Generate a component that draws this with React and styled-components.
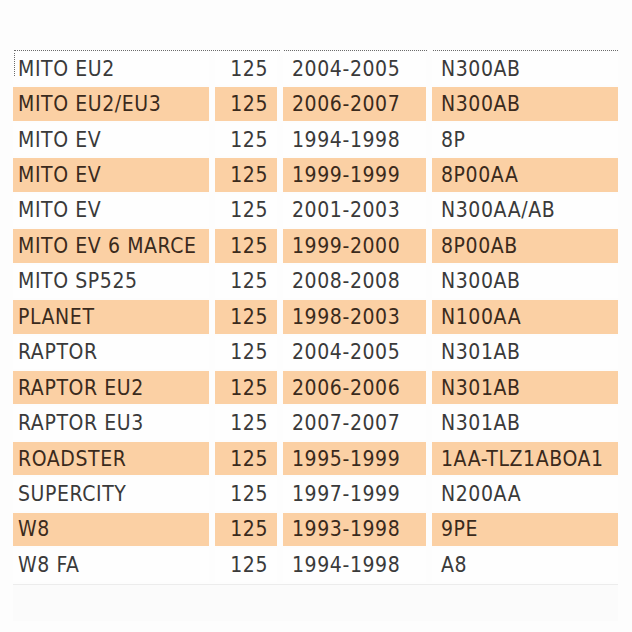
import React from 'react';
import styled, { createGlobalStyle } from 'styled-components';

const GlobalStyle = createGlobalStyle`
  html, body {
    margin: 0;
    padding: 0;
    background: #fdfdfd;
  }
`;

const Page = styled.div`
  width: 632px;
  height: 632px;
  padding: 50px 0 0 13px;
  box-sizing: border-box;
  overflow: hidden;
  font-family: "DejaVu Sans Condensed", "DejaVu Sans", sans-serif;
  font-stretch: condensed;
  font-size: 21px;
  letter-spacing: 0.6px;
`;

const HeadRow = styled.div`
  display: flex;
  width: 605px;
  height: 1px;
  margin-bottom: 1px;
`;

const HeadRule = styled.div`
  width: ${p => p.$w}px;
  margin-left: ${p => p.$ml}px;
  border-top: 1px dotted #6a6a6a;
`;

const Table = styled.div`
  display: grid;
  grid-template-columns: 196px 62px 143px 186px;
  column-gap: 6px;
  width: 605px;
`;

const Row = styled.div`
  grid-column: 1 / -1;
  display: grid;
  grid-template-columns: subgrid;
  height: 33.45px;
  margin-bottom: 2px;
`;

const Cell = styled.div`
  display: flex;
  align-items: center;
  justify-content: ${p => (p.$right ? 'flex-end' : 'flex-start')};
  padding: ${p => (p.$first ? '0 0 0 5px' : '0 9px')};
  background: ${p => (p.$odd ? '#fbd0a4' : '#fefefe')};
  color: ${p => (p.$odd ? '#3a2a1c' : '#3a3a3a')};
  white-space: nowrap;
  overflow: hidden;
  position: relative;
  ${p => p.$mark && `
    &::before {
      content: '';
      position: absolute;
      left: 1px;
      top: -1px;
      height: 25px;
      border-left: 1px dotted #6a6a6a;
    }
  `}
`;

const Footer = styled.div`
  grid-column: 1 / -1;
  height: 36px;
  border-top: 1px solid #ececec;
  background: #fbfbfb;
`;

const rows = [
  ['MITO EU2', '125', '2004-2005', 'N300AB'],
  ['MITO EU2/EU3', '125', '2006-2007', 'N300AB'],
  ['MITO EV', '125', '1994-1998', '8P'],
  ['MITO EV', '125', '1999-1999', '8P00AA'],
  ['MITO EV', '125', '2001-2003', 'N300AA/AB'],
  ['MITO EV 6 MARCE', '125', '1999-2000', '8P00AB'],
  ['MITO SP525', '125', '2008-2008', 'N300AB'],
  ['PLANET', '125', '1998-2003', 'N100AA'],
  ['RAPTOR', '125', '2004-2005', 'N301AB'],
  ['RAPTOR EU2', '125', '2006-2006', 'N301AB'],
  ['RAPTOR EU3', '125', '2007-2007', 'N301AB'],
  ['ROADSTER', '125', '1995-1999', '1AA-TLZ1ABOA1'],
  ['SUPERCITY', '125', '1997-1999', 'N200AA'],
  ['W8', '125', '1993-1998', '9PE'],
  ['W8 FA', '125', '1994-1998', 'A8'],
];

export default function App() {
  return (
    <Page>
      <GlobalStyle />
      <HeadRow>
        <HeadRule $w={266} $ml={1} />
        <HeadRule $w={143} $ml={4} />
        <HeadRule $w={185} $ml={6} />
      </HeadRow>
      <Table>
        {rows.map((r, i) => {
          const odd = i % 2 === 1;
          return (
            <Row key={i}>
              <Cell $first $odd={odd} $mark={i === 0}>{r[0]}</Cell>
              <Cell $right $odd={odd}>{r[1]}</Cell>
              <Cell $odd={odd}>{r[2]}</Cell>
              <Cell $odd={odd}>{r[3]}</Cell>
            </Row>
          );
        })}
        <Footer />
      </Table>
    </Page>
  );
}
